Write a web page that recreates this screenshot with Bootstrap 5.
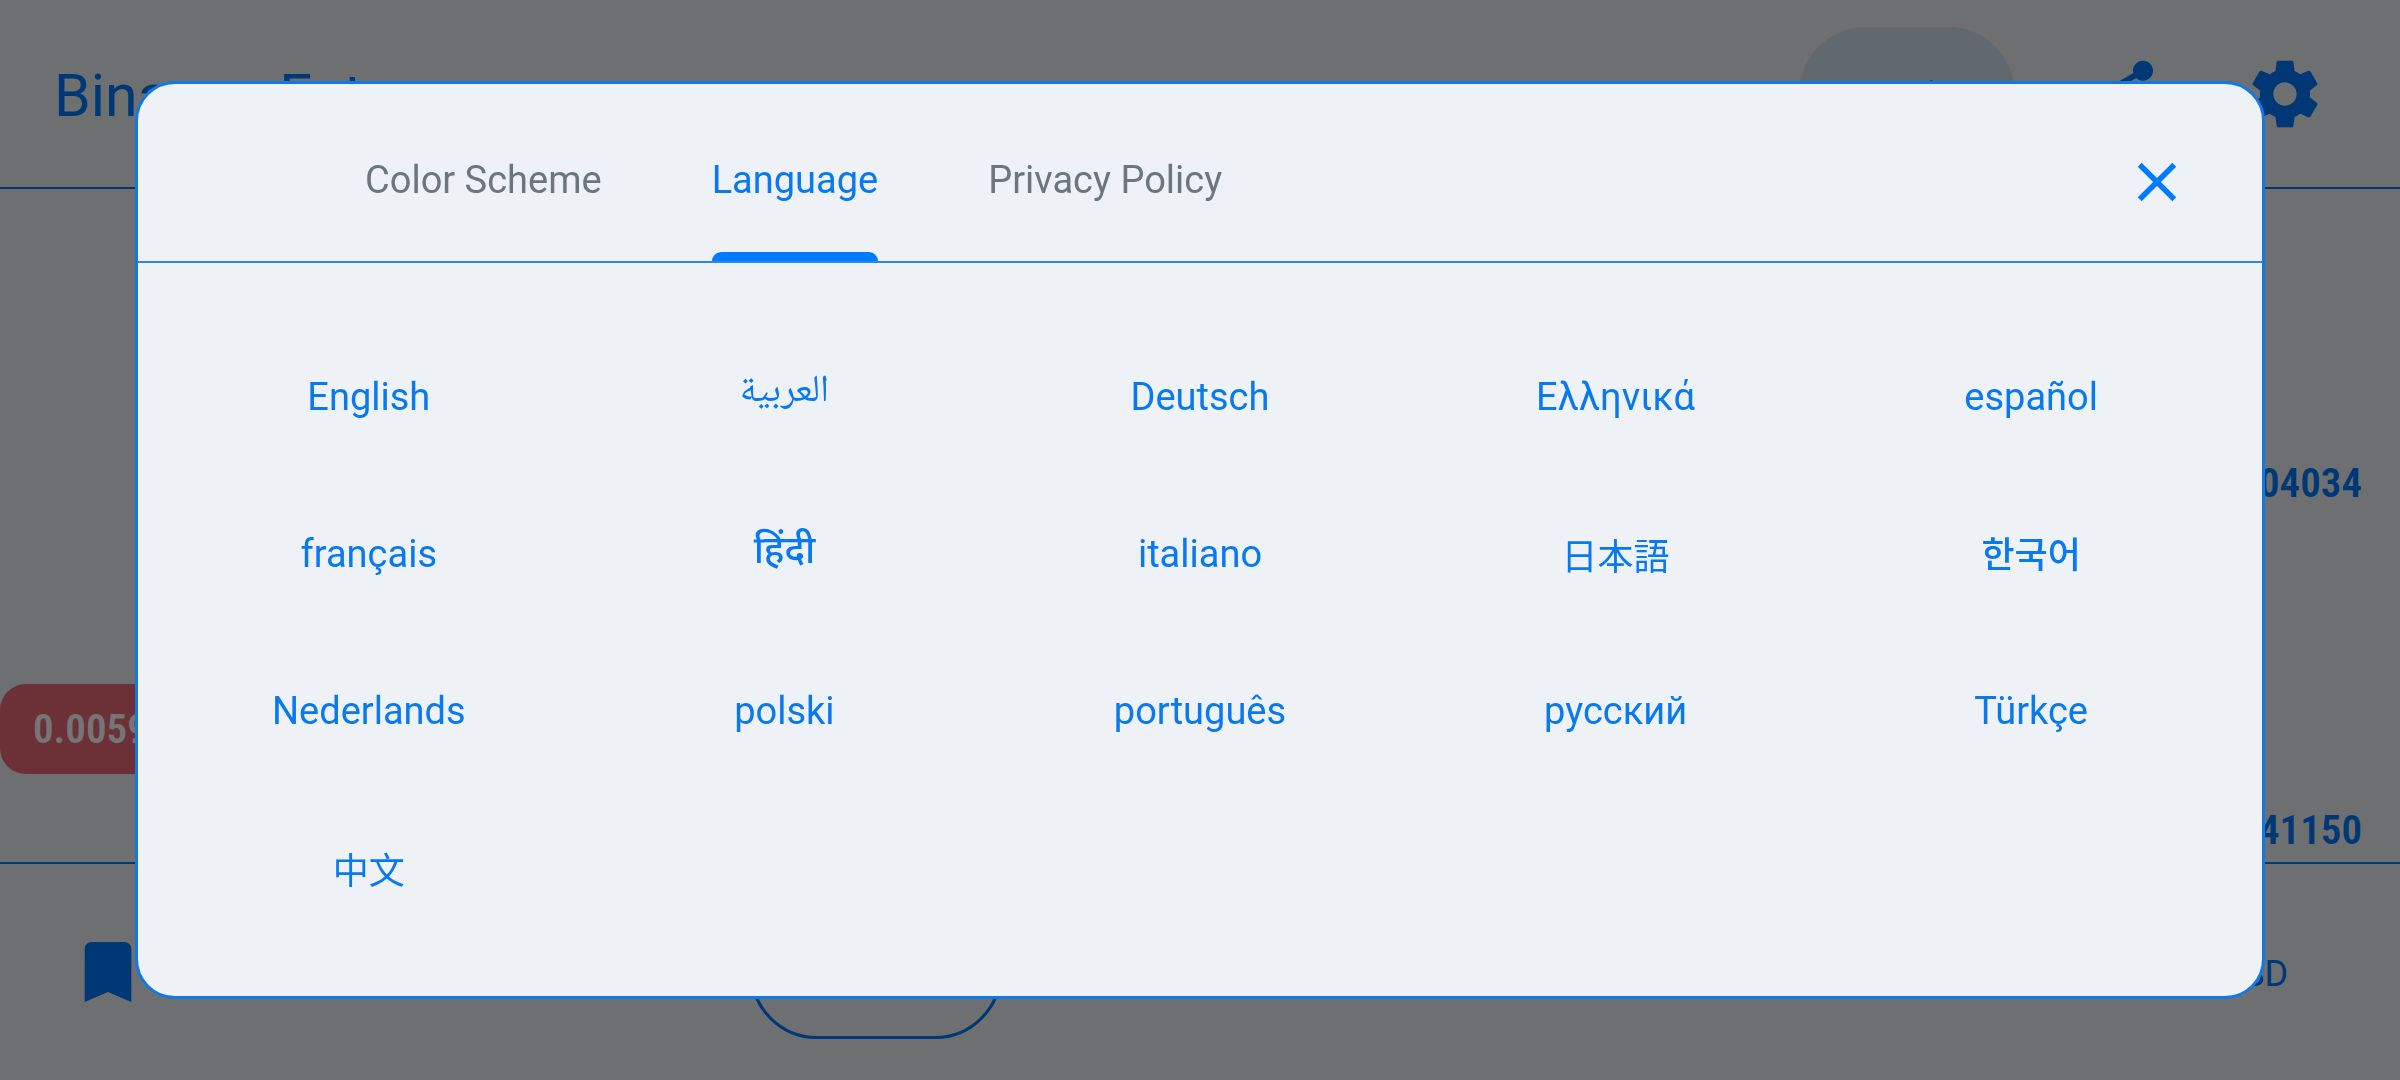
<!DOCTYPE html>
<html lang="en">
<head>
<meta charset="utf-8">
<meta name="viewport" content="width=device-width, initial-scale=1">
<title>Binance Futures</title>
<link href="https://cdn.jsdelivr.net/npm/bootstrap@5.3.0/dist/css/bootstrap.min.css" rel="stylesheet">
<style>
  :root { --brand: #007aff; --brand-text: #0879ee; --brand-line: #1279e4; --surface: #eef2f7; --muted: #6b777b; }
  body { background: var(--surface); color: var(--brand); font-family: Roboto, "Noto Sans", "Noto Sans CJK JP", sans-serif; font-size: 36px; line-height: 48px; }
  button { font: inherit; }
  svg { display: block; fill: currentColor; }
  .icon-btn { border: 0; padding: 0; background: none; color: var(--brand); }
  .icon-lg { width: 80px; height: 80px; }
  .app-bar { height: 189px; padding: 0 75px 0 54px; border-bottom: 2px solid var(--brand); }
  .app-title { font-size: 59px; line-height: 72px; font-weight: 400; }
  .app-actions { gap: 82px; }
  .mode-pill { width: 216px; height: 134px; border-radius: 67px; background: #d3e5f2; margin-right: -14px; }
  .quotes { padding: 266px 38px 4px 0; }
  .figure-text { font-family: "Roboto Condensed", Roboto, sans-serif; font-size: 41px; line-height: 56px; font-weight: 600; }
  .price-chip { width: 220px; height: 90px; margin-bottom: 28px; padding-left: 33px; border-radius: 26px; background: #e96b78; color: #fff; }
  .bottom-bar { height: 218px; padding: 0 112px 0 68px; border-top: 2px solid var(--brand); }
  .size-btn { width: 252px; height: 134px; border-radius: 67px; border: 3px solid var(--brand); background: none; color: var(--brand); }
  .bar-lead { flex: 0 0 682px; }

  .settings-modal { background: rgba(0, 0, 0, .54); padding: 81px 135px; }
  .settings-modal .modal-dialog { max-width: none; margin: 0; }
  .settings-modal .modal-content { min-height: 918px; background: var(--surface); color: var(--brand); border: 3px solid var(--brand-line); border-radius: 40px; }
  .settings-modal .modal-header { height: 179px; padding: 0 72px 0 227px; border-bottom: 2px solid #2b88ea; border-radius: 0; }
  .settings-modal .modal-body { padding: 55px 23px 47px; }
  .settings-tabs { gap: 110px; }
  .settings-tabs .nav-link { position: relative; padding: 14px 0 0; border: 0; border-radius: 0; background: none; color: var(--muted); font-size: 38px; }
  .settings-tabs .nav-link.active { background: none; color: var(--brand-text); }
  .settings-tabs .nav-link.active::after { content: ""; position: absolute; left: 0; right: 0; bottom: 0; height: 9px; border-radius: 9px 9px 0 0; background: var(--brand); }
  .close-icon { width: 66px; height: 66px; margin-top: 18px; }
  .lang-btn { height: 157px; border: 0; padding: 0; background: none; color: var(--brand-text); font-size: 38px; }
  .lang-btn:lang(ar) { font-family: "Noto Naskh Arabic", "Noto Sans Arabic", "DejaVu Sans", sans-serif; padding-bottom: 8px; }
  .lang-btn:lang(hi) { font-weight: 500; padding-bottom: 8px; }
  .lang-btn:lang(ko) { font-family: "Noto Sans CJK KR", sans-serif; font-size: 36px; font-weight: 500; padding-bottom: 4px; }
  .lang-btn:lang(zh) { font-family: "Noto Sans CJK SC", sans-serif; font-size: 36px; }
  .lang-btn:lang(ja) { font-family: "Noto Sans CJK JP", sans-serif; font-size: 36px; }
</style>
<script src="https://cdn.jsdelivr.net/npm/bootstrap@5.3.0/dist/js/bootstrap.bundle.min.js"></script>
</head>
<body class="d-flex flex-column min-vh-100 overflow-hidden">

<header class="app-bar d-flex align-items-center justify-content-between">
  <h1 class="app-title m-0 pt-1">Binance Futures</h1>
  <div class="app-actions d-flex align-items-center">
    <button class="icon-btn mode-pill d-flex align-items-center justify-content-center" type="button" aria-label="Chart">
      <svg class="icon-lg" viewBox="0 0 24 24"><path d="M3.4 18 2 16.6 8.5 10l4 4L19.300 7.700 20.700 9.100l-8.200 7.800-4-4z"/></svg>
    </button>
    <button class="icon-btn" type="button" aria-label="Share">
      <svg class="icon-lg" viewBox="0 0 24 24"><path d="M18 16.08c-.76 0-1.44.3-1.96.77L8.91 12.7c.05-.23.09-.46.09-.7s-.04-.47-.09-.7l7.05-4.11c.54.5 1.25.81 2.04.81 1.66 0 3-1.34 3-3s-1.34-3-3-3-3 1.34-3 3c0 .24.04.47.09.7L8.04 9.81C7.5 9.31 6.79 9 6 9c-1.66 0-3 1.34-3 3s1.34 3 3 3c.79 0 1.5-.31 2.04-.81l7.12 4.16c-.05.21-.08.43-.08.65 0 1.61 1.31 2.92 2.92 2.92s2.92-1.31 2.92-2.92-1.31-2.92-2.92-2.92z"/></svg>
    </button>
    <button class="icon-btn" type="button" aria-label="Settings">
      <svg class="icon-lg" viewBox="0 0 24 24"><path d="M19.43 12.98c.04-.32.07-.64.07-.98s-.03-.66-.07-.98l2.11-1.65c.19-.15.24-.42.12-.64l-2-3.46c-.12-.22-.39-.3-.61-.22l-2.49 1c-.52-.4-1.08-.73-1.69-.98l-.38-2.65C14.46 2.18 14.25 2 14 2h-4c-.25 0-.46.18-.49.42l-.38 2.65c-.61.25-1.17.59-1.69.98l-2.49-1c-.23-.09-.49 0-.61.22l-2 3.46c-.13.22-.07.49.12.64l2.11 1.65c-.04.32-.07.65-.07.98s.03.66.07.98l-2.11 1.65c-.19.15-.24.42-.12.64l2 3.46c.12.22.39.3.61.22l2.49-1c.52.4 1.08.73 1.69.98l.38 2.65c.03.24.24.42.49.42h4c.25 0 .46-.18.49-.42l.38-2.65c.61-.25 1.17-.59 1.69-.98l2.49 1c.23.09.49 0 .61-.22l2-3.46c.12-.22.07-.49-.12-.64l-2.11-1.65zM12 15.5c-1.93 0-3.5-1.57-3.5-3.5s1.57-3.5 3.5-3.5 3.5 1.57 3.5 3.5-1.57 3.5-3.5 3.5z"/></svg>
    </button>
  </div>
</header>

<main class="quotes flex-grow-1 d-flex flex-column">
  <div class="figure-text text-end">0.004034</div>
  <div class="price-chip figure-text d-flex align-items-center mt-auto">0.005935</div>
  <div class="figure-text text-end">0.041150</div>
</main>

<footer class="bottom-bar d-flex align-items-center">
  <div class="bar-lead d-flex">
    <button class="icon-btn" type="button" aria-label="Bookmarks">
      <svg class="icon-lg" viewBox="0 0 24 24"><path d="M17 3H7c-1.100 0-1.990.9-1.990 2L5 21l7-3 7 3V5c0-1.100-.9-2-2-2z"/></svg>
    </button>
  </div>
  <button class="size-btn" type="button">1h</button>
  <span class="ms-auto pt-1">USD</span>
</footer>

<div class="modal settings-modal d-block" tabindex="-1" role="dialog" aria-label="Settings">
  <div class="modal-dialog">
    <div class="modal-content">
      <div class="modal-header align-items-stretch">
        <div class="settings-tabs nav align-items-stretch" role="tablist">
          <button class="nav-link" type="button" role="tab">Color Scheme</button>
          <button class="nav-link active" type="button" role="tab" aria-selected="true">Language</button>
          <button class="nav-link" type="button" role="tab">Privacy Policy</button>
        </div>
        <button class="icon-btn align-self-center" type="button" aria-label="Close">
          <svg class="close-icon" viewBox="0 0 24 24"><path d="M19 6.410 17.590 5 12 10.590 6.410 5 5 6.410 10.590 12 5 17.590 6.410 19 12 13.410 17.590 19 19 17.590 13.410 12z"/></svg>
        </button>
      </div>
      <div class="modal-body">
        <div class="row row-cols-5 g-0">
          <button class="col lang-btn" type="button" lang="en">English</button>
          <button class="col lang-btn" type="button" lang="ar">العربية</button>
          <button class="col lang-btn" type="button" lang="de">Deutsch</button>
          <button class="col lang-btn" type="button" lang="el">Ελληνικά</button>
          <button class="col lang-btn" type="button" lang="es">español</button>
          <button class="col lang-btn" type="button" lang="fr">français</button>
          <button class="col lang-btn" type="button" lang="hi">हिंदी</button>
          <button class="col lang-btn" type="button" lang="it">italiano</button>
          <button class="col lang-btn" type="button" lang="ja">日本語</button>
          <button class="col lang-btn" type="button" lang="ko">한국어</button>
          <button class="col lang-btn" type="button" lang="nl">Nederlands</button>
          <button class="col lang-btn" type="button" lang="pl">polski</button>
          <button class="col lang-btn" type="button" lang="pt">português</button>
          <button class="col lang-btn" type="button" lang="ru">русский</button>
          <button class="col lang-btn" type="button" lang="tr">Türkçe</button>
          <button class="col lang-btn" type="button" lang="zh">中文</button>
        </div>
      </div>
    </div>
  </div>
</div>
</body>
</html>
